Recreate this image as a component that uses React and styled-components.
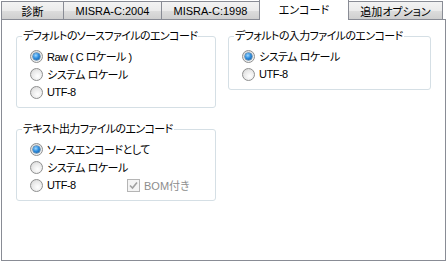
import React from "react";
import styled, { createGlobalStyle, css } from "styled-components";

const GlobalStyle = createGlobalStyle`
    html, body {
        margin: 0;
        padding: 0;
        background: #ffffff;
    }
    body {
        font-family: "Liberation Sans", "Noto Sans CJK JP", sans-serif;
        font-size: 11px;
        color: #000000;
        font-feature-settings: "palt";
    }
`;

const tabs = [
    { label: "診断", width: 62 },
    { label: "MISRA-C:2004", width: 98 },
    { label: "MISRA-C:1998", width: 98 },
    { label: "エンコード", width: 89, active: true },
    { label: "追加オプション", width: 94 },
];

function Radio({ checked, children }) {
    return (
        <Row>
            <RadioDot checked={checked} />
            <Text>{children}</Text>
        </Row>
    );
}

function Group({ title, width, children }) {
    return (
        <Fieldset width={width}>
            <Legend>{title}</Legend>
            <Items>{children}</Items>
        </Fieldset>
    );
}

export default function App() {
    return (
        <>
            <GlobalStyle />
            <Window>
                <TabStrip>
                    {tabs.map((t) => (
                        <Tab key={t.label} width={t.width} active={t.active}>
                            {t.label}
                        </Tab>
                    ))}
                </TabStrip>
                <Panel>
                    <Column>
                        <Group title="デフォルトのソースファイルのエンコード" width={200}>
                            <Radio checked>Raw ( C ロケール )</Radio>
                            <Radio>システム ロケール</Radio>
                            <Radio>UTF-8</Radio>
                        </Group>
                        <Group title="テキスト出力ファイルのエンコード" width={200}>
                            <Radio checked>ソースエンコードとして</Radio>
                            <Radio>システム ロケール</Radio>
                            <Row>
                                <RadioDot />
                                <Text fixed>UTF-8</Text>
                                <CheckWrap>
                                    <CheckBox>
                                        <svg width="9" height="9" viewBox="0 0 9 9">
                                            <path d="M1 4.5 L3.5 7 L8 1.5" fill="none" stroke="#a0a0a0" strokeWidth="1.6" />
                                        </svg>
                                    </CheckBox>
                                    <DisabledText>BOM付き</DisabledText>
                                </CheckWrap>
                            </Row>
                        </Group>
                    </Column>
                    <Column>
                        <Group title="デフォルトの入力ファイルのエンコード" width={203}>
                            <Radio checked>システム ロケール</Radio>
                            <Radio>UTF-8</Radio>
                        </Group>
                    </Column>
                </Panel>
            </Window>
        </>
    );
}

const Window = styled.div`
    width: 447px;
    height: 262px;
    display: flex;
    flex-direction: column;
`;

const TabStrip = styled.div`
    display: flex;
    align-items: flex-end;
    height: 20px;
    padding-left: 1px;
    position: relative;
    z-index: 1;
`;

const Tab = styled.div`
    box-sizing: border-box;
    width: ${(p) => p.width + 1}px;
    height: 18px;
    margin-right: -1px;
    margin-bottom: 1px;
    border: 1px solid #898c95;
    border-bottom: none;
    background: linear-gradient(#f3f3f3, #ebebeb 50%, #dddddd 51%, #cfcfcf);
    display: flex;
    align-items: center;
    justify-content: center;
    white-space: nowrap;
    padding-top: 1px;
    ${(p) =>
        p.active &&
        css`
            height: 21px;
            margin-bottom: 0;
            background: #ffffff;
            position: relative;
            z-index: 2;
            padding-bottom: 3px;
        `}
`;

const Panel = styled.div`
    box-sizing: border-box;
    width: 445px;
    height: 242px;
    margin-left: 1px;
    margin-top: -1px;
    border: 1px solid #898c95;
    background: #ffffff;
    display: flex;
    gap: 12px;
    padding: 10px 0 0 14px;
`;

const Column = styled.div`
    display: flex;
    flex-direction: column;
    gap: 15px;
`;

const Fieldset = styled.fieldset`
    box-sizing: border-box;
    width: ${(p) => p.width}px;
    margin: 0;
    padding: 0 0 6px 0;
    border: 1px solid #d5dfe5;
    border-radius: 3px;
`;

const Legend = styled.legend`
    margin-left: 5px;
    padding: 0 1px;
    line-height: 13px;
    height: 13px;
    white-space: nowrap;
    letter-spacing: -0.6px;
`;

const Items = styled.div`
    display: flex;
    flex-direction: column;
    padding: 4px 0 0 13px;
`;

const Row = styled.div`
    display: flex;
    align-items: center;
    height: 18px;
    gap: 4px;
    white-space: nowrap;
`;

const Text = styled.span`
    letter-spacing: -0.5px;
    ${(p) => p.fixed && "width: 76px;"}
`;

const RadioDot = styled.span`
    box-sizing: border-box;
    width: 13px;
    height: 13px;
    border-radius: 50%;
    border: 1px solid #8f9090;
    background: radial-gradient(circle at 60% 65%, #ffffff 0%, #e9e9e9 55%, #cfcfcf 100%);
    display: flex;
    align-items: center;
    justify-content: center;
    flex: none;
    &::after {
        content: "";
        display: ${(p) => (p.checked ? "block" : "none")};
        width: 7px;
        height: 7px;
        border-radius: 50%;
        background: radial-gradient(circle at 40% 35%, #9fd8ff 0%, #2e8ee0 45%, #13508f 100%);
        box-shadow: 0 0 0 0.5px #1f5a8a;
    }
`;

const CheckWrap = styled.span`
    display: flex;
    align-items: center;
    gap: 4px;
`;

const CheckBox = styled.span`
    box-sizing: border-box;
    width: 13px;
    height: 13px;
    border: 1px solid #b5b5b5;
    background: #f4f4f4;
    display: flex;
    align-items: center;
    justify-content: center;
`;

const DisabledText = styled.span`
    color: #8d8d8d;
`;
